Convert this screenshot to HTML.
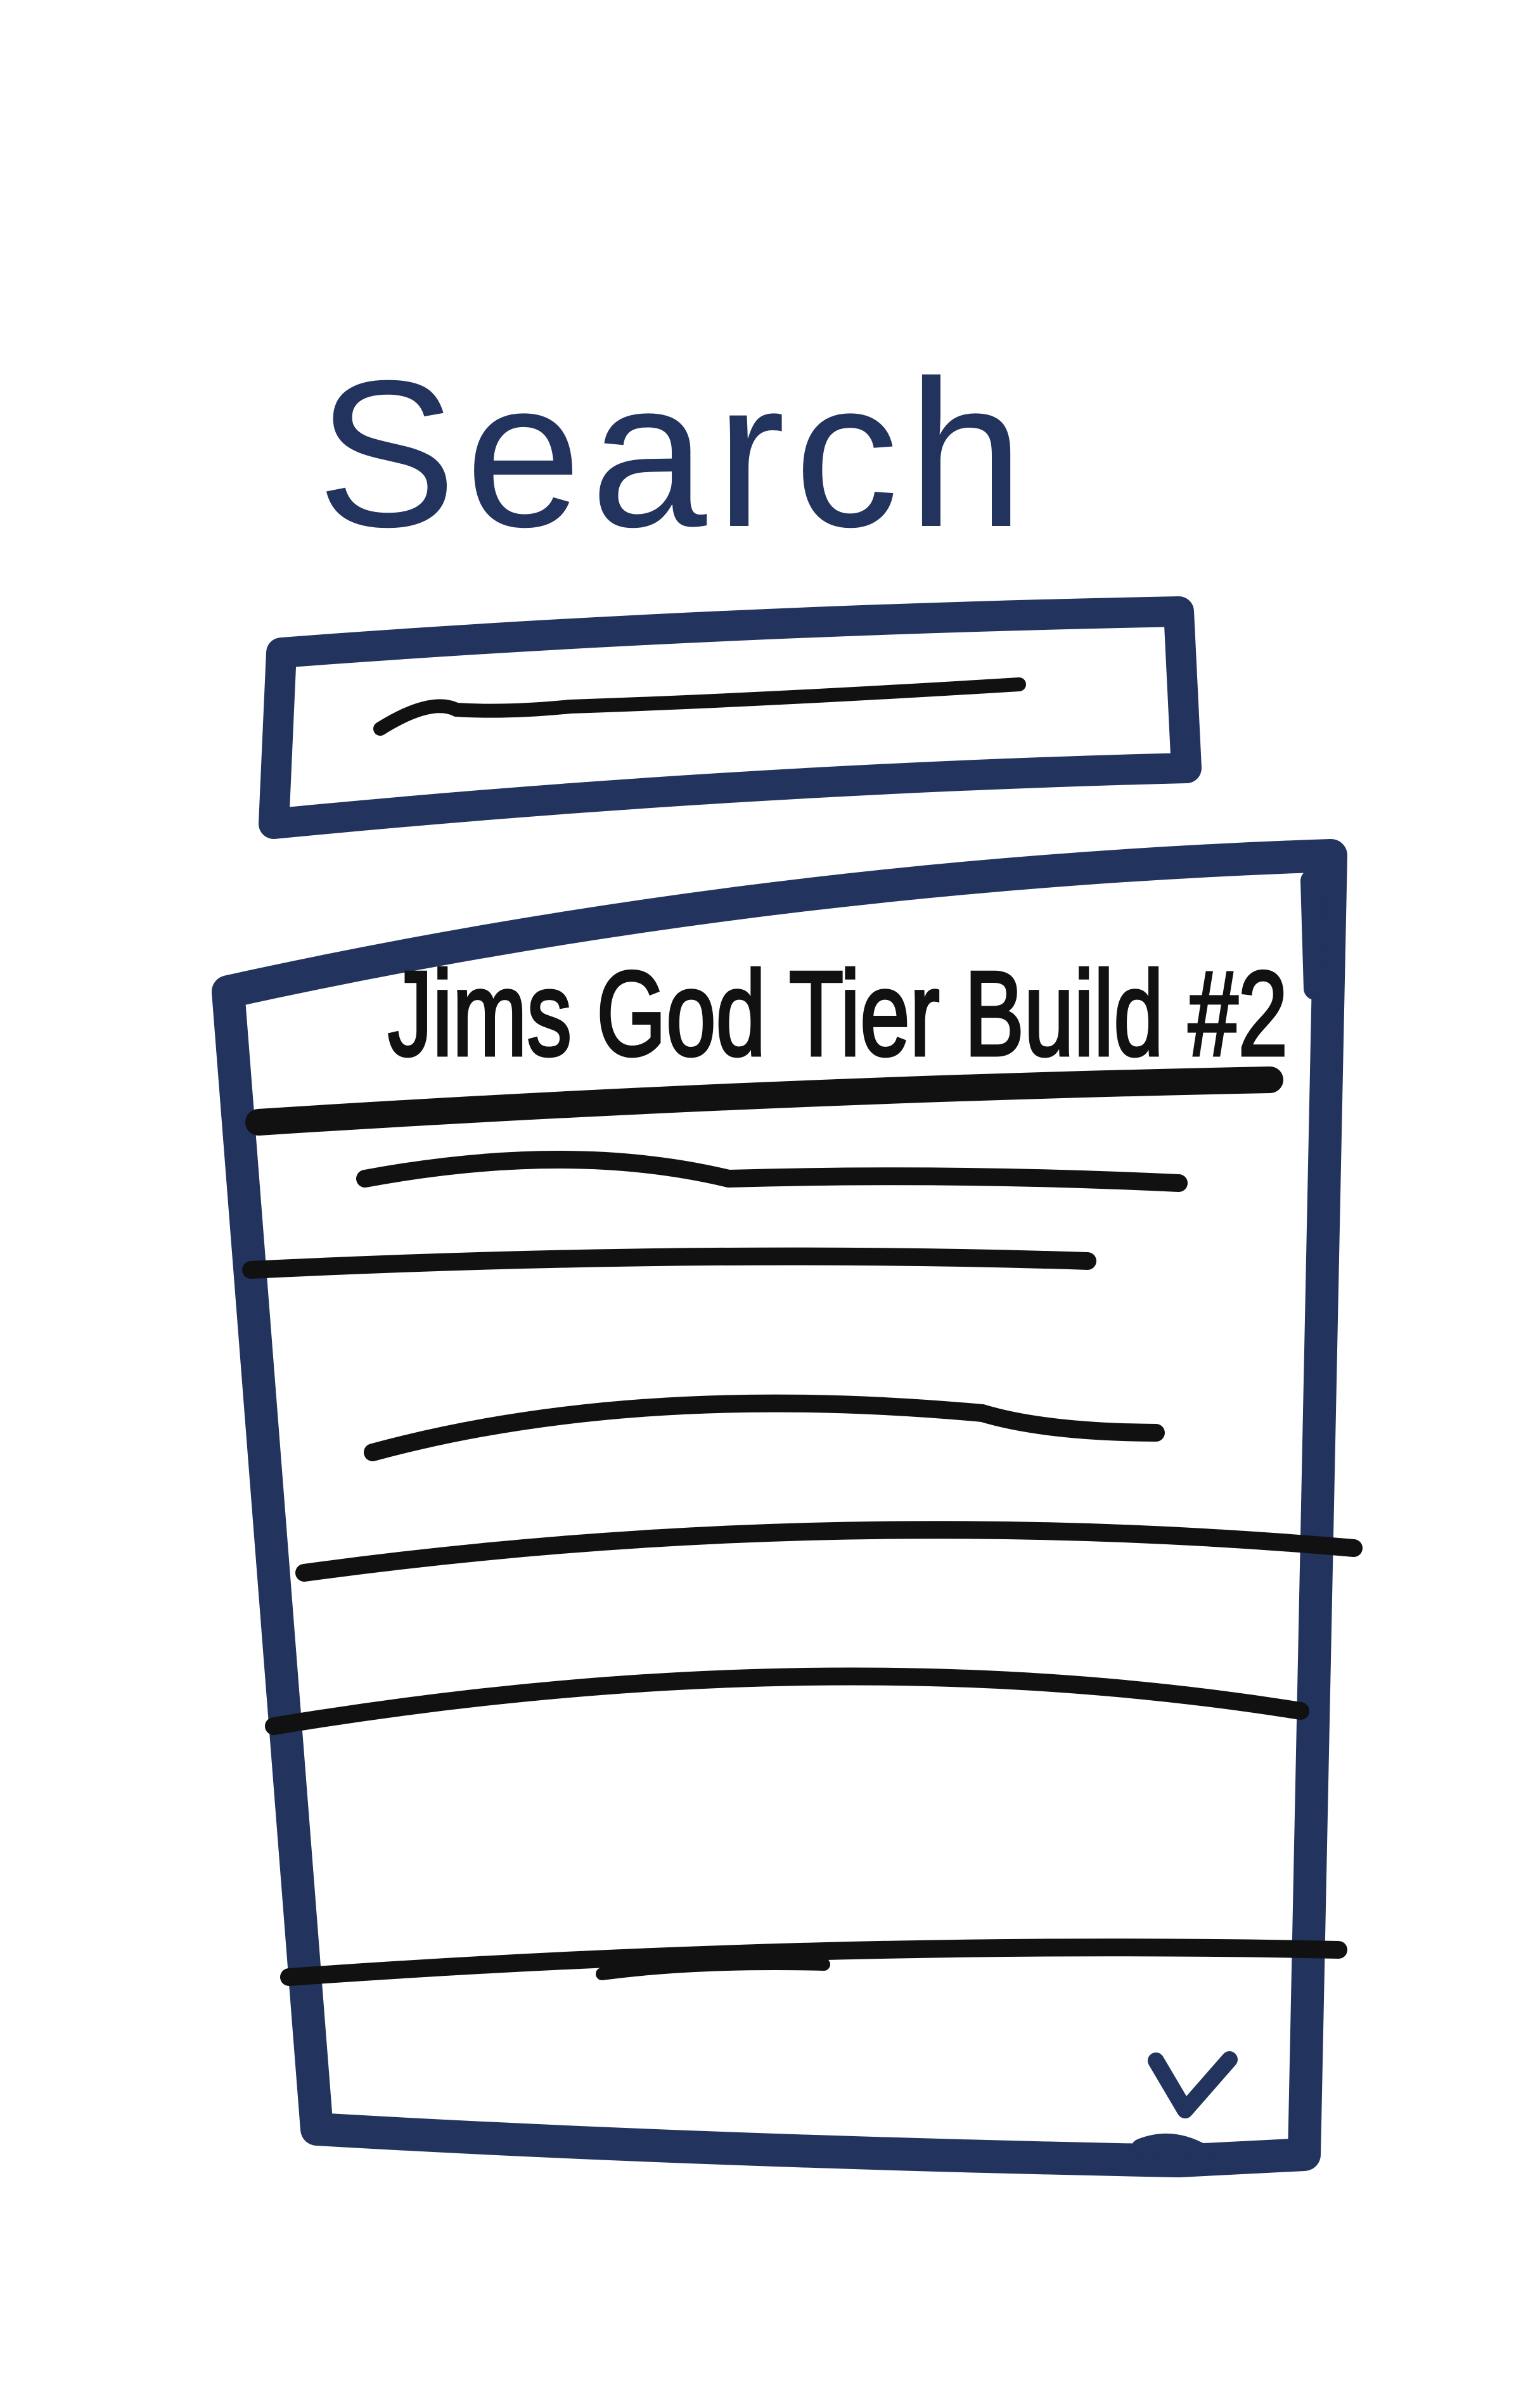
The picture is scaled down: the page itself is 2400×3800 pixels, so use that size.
<!DOCTYPE html>
<html>
<head>
<meta charset="utf-8">
<style>
html,body{margin:0;padding:0;background:#fff;}
body{width:2400px;height:3800px;overflow:hidden;}
svg{display:block;}
</style>
</head>
<body>
<svg width="2400" height="3800" viewBox="0 0 2400 3800" xmlns="http://www.w3.org/2000/svg">
  <g fill="none" stroke="#22335e" stroke-linecap="round" stroke-linejoin="round">
    <path d="M444 1030 Q1100 980 1860 965 L1872 1212 Q1150 1230 432 1300 Z" stroke-width="48"/>
    <path d="M360 1565 Q1200 1380 2100 1350 L2058 3400 L1860 3410 Q1100 3395 500 3360 Z" stroke-width="52"/>
    <path d="M2070 1390 L2075 1560" stroke-width="36"/>
    <path d="M1824 3252 L1870 3330 L1940 3250" stroke-width="26"/>
    <path d="M1800 3390 Q1850 3370 1900 3400" stroke-width="30"/>
  </g>
  <text x="500" y="830" font-family="Liberation Sans, sans-serif" font-size="330" fill="#22335e" letter-spacing="14">Search</text>
  <path d="M600 1150 Q680 1100 720 1120 Q800 1125 900 1115 Q1200 1105 1608 1080" fill="none" stroke="#111" stroke-width="22" stroke-linecap="round"/>
  <text x="612" y="1665" font-family="Liberation Sans Narrow, Liberation Sans, sans-serif" font-size="190" fill="#111" stroke="#111" stroke-width="5" textLength="1420" lengthAdjust="spacingAndGlyphs">Jims God Tier Build #2</text>
  <g fill="none" stroke="#111" stroke-linecap="round">
    <path d="M408 1771 Q1200 1720 2004 1704" stroke-width="42"/>
    <path d="M576 1860 Q900 1800 1150 1860 Q1500 1850 1860 1867" stroke-width="28"/>
    <path d="M396 2004 Q1100 1970 1716 1990" stroke-width="28"/>
    <path d="M588 2292 Q1000 2180 1550 2230 Q1650 2260 1824 2261" stroke-width="28"/>
    <path d="M480 2482 Q1300 2370 2136 2443" stroke-width="28"/>
    <path d="M432 2724 Q1300 2580 2052 2700" stroke-width="28"/>
    <path d="M456 3120 Q1300 3060 2112 3077" stroke-width="28"/>
    <path d="M950 3115 Q1100 3095 1300 3100" stroke-width="20"/>
  </g>
</svg>
</body>
</html>
